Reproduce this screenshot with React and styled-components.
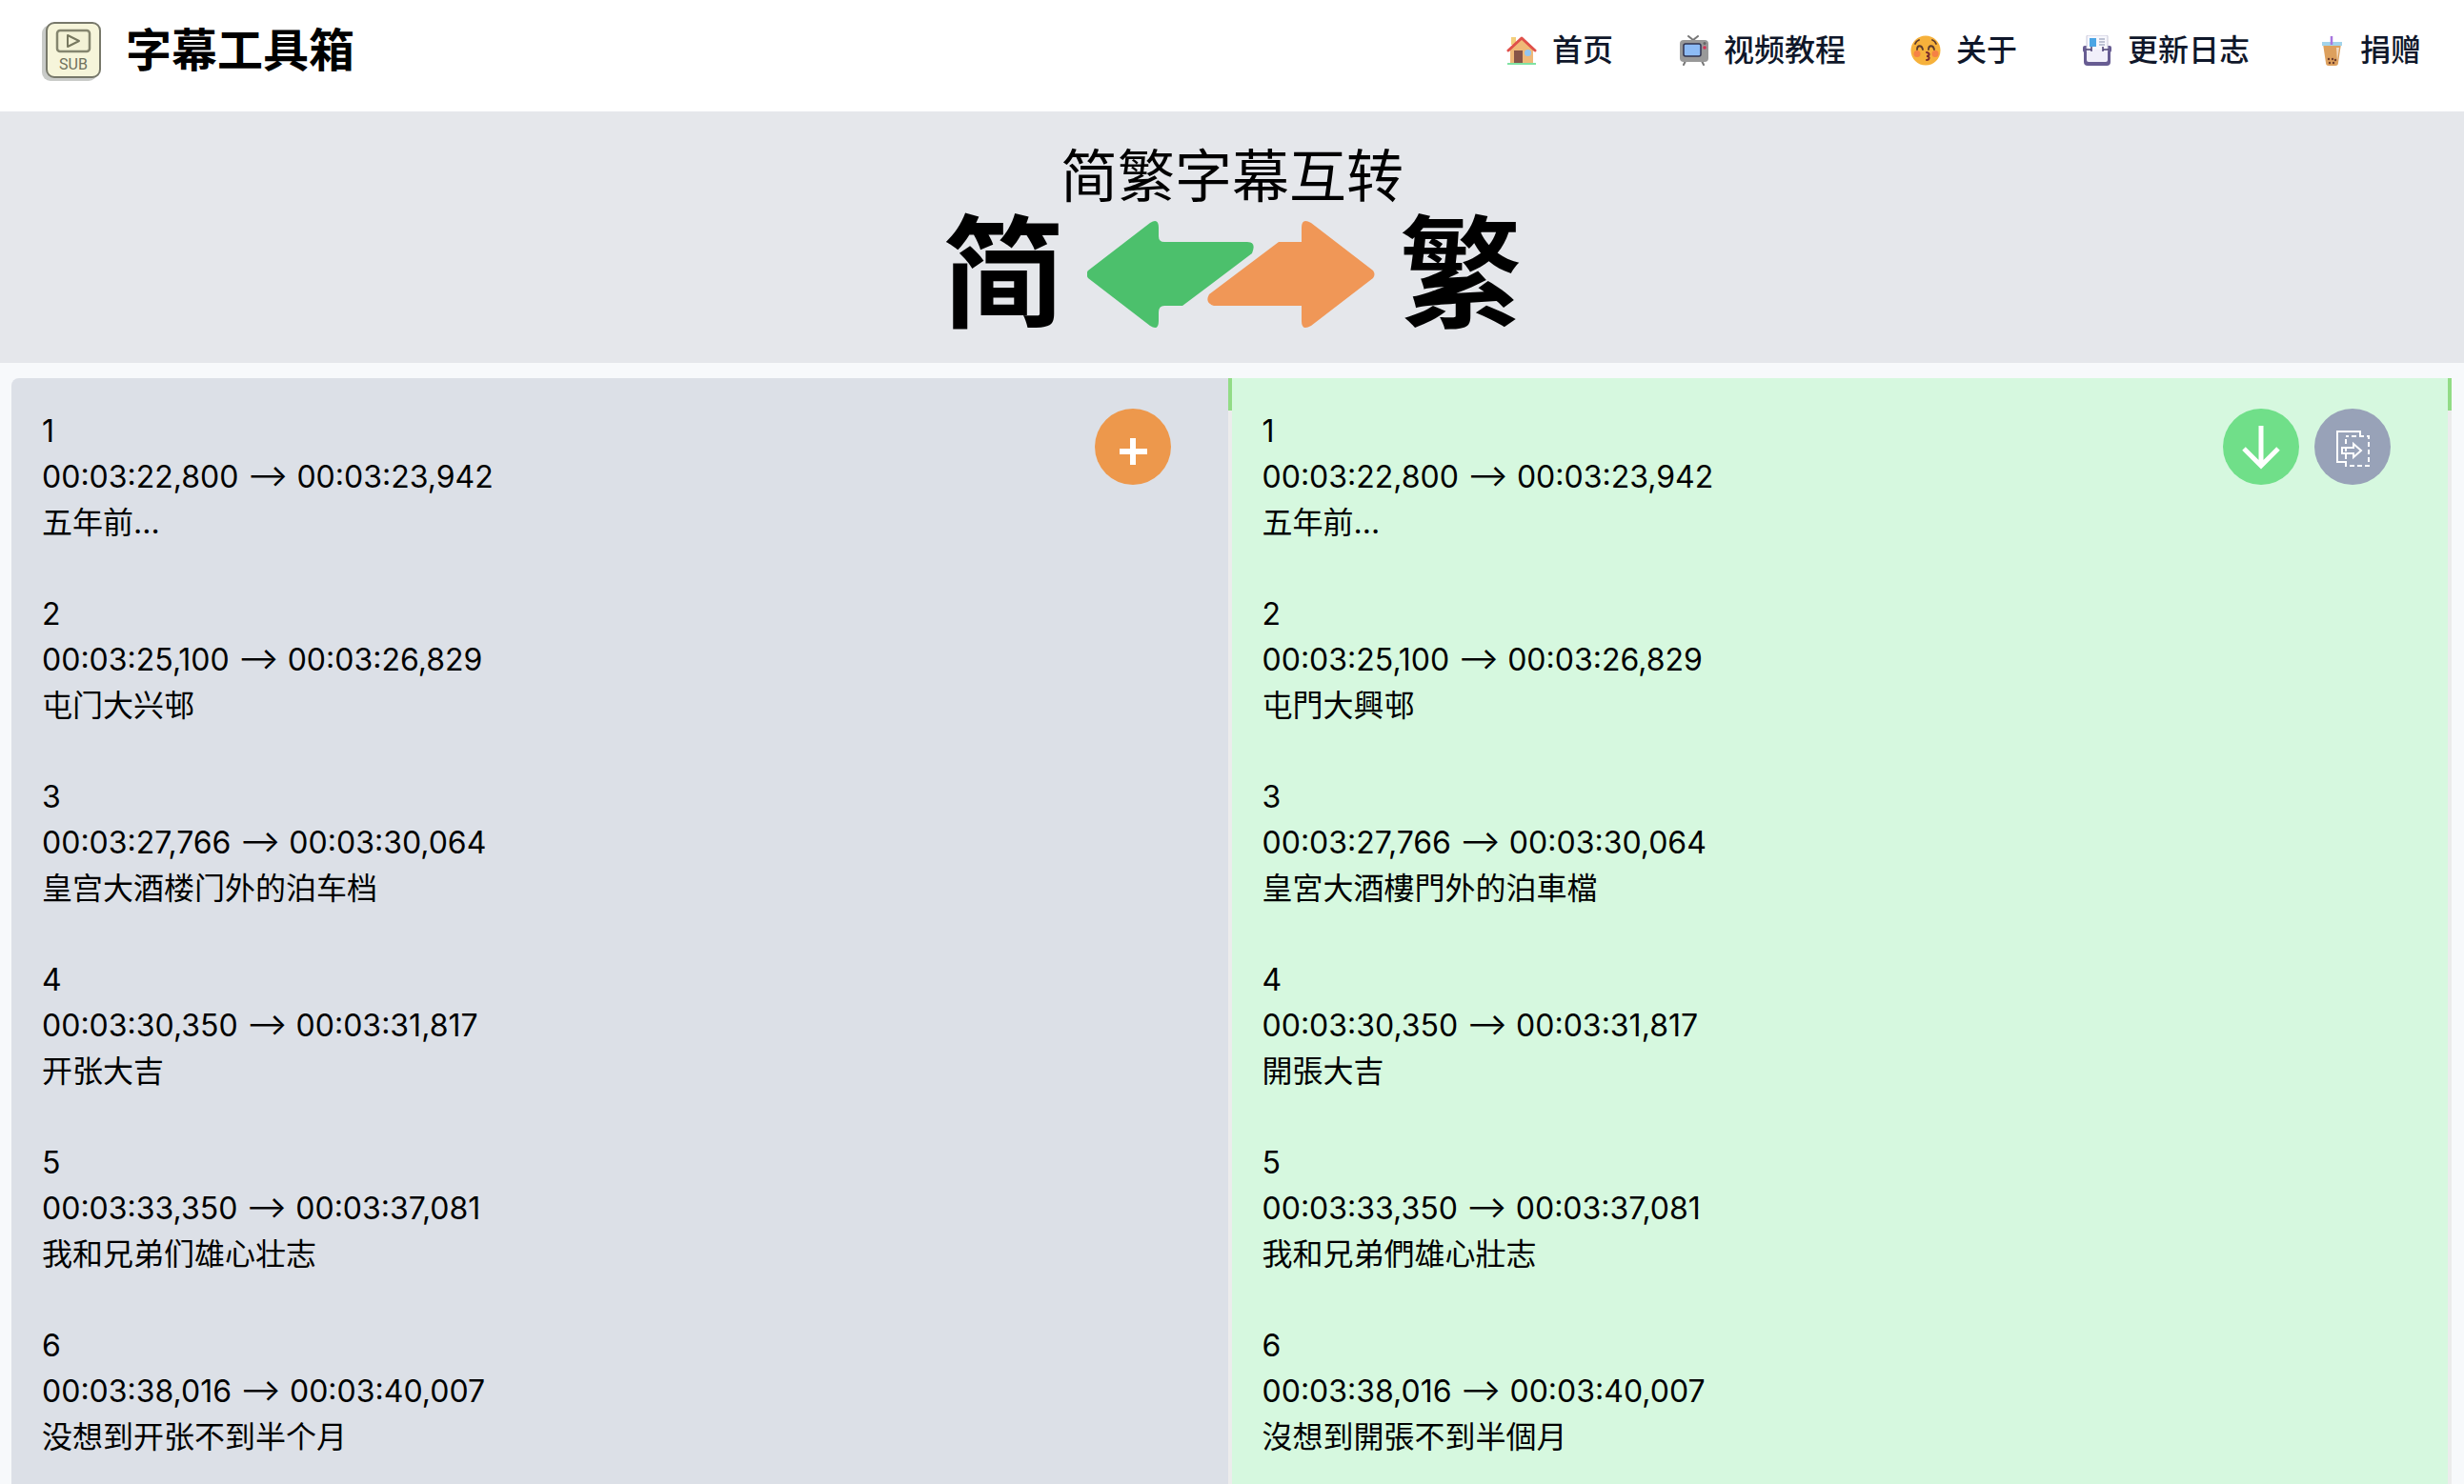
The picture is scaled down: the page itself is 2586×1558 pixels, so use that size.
import React from "react";
import styled, { createGlobalStyle } from "styled-components";

const GlobalStyle = createGlobalStyle`
  *, *::before, *::after { box-sizing: border-box; }
  body {
    margin: 0;
    background: #f7f9fb;
    color: #000;
    font-family: Inter, "Noto Sans CJK SC", sans-serif;
    font-size: 32px;
    line-height: 48px;
  }
`;

const Page = styled.div`
  display: flex;
  flex-direction: column;
  height: 100vh;
  overflow: hidden;
`;

const Header = styled.header`
  display: flex;
  align-items: center;
  justify-content: space-between;
  padding: 21px 45px 32px 44px;
  background: #fff;
`;

const Brand = styled.a`
  display: flex;
  align-items: center;
  gap: 24px;
  color: #000;
  text-decoration: none;
  font-size: 48px;
  font-weight: 700;
  line-height: 64px;
`;

const Nav = styled.nav`
  display: flex;
  gap: 68px;
`;

const NavLink = styled.a`
  display: flex;
  align-items: center;
  gap: 16px;
  color: #0f172a;
  font-weight: 500;
  text-decoration: none;
`;

const Hero = styled.section`
  display: flex;
  flex-direction: column;
  align-items: center;
  gap: 3px;
  padding: 32px 32px 29px;
  background: #e5e7eb;
`;

const HeroTitle = styled.h1`
  margin: 0;
  font-size: 60px;
  font-weight: 400;
  line-height: 72px;
`;

const Banner = styled.div`
  display: flex;
  align-items: center;
  gap: 24px;
  font-size: 128px;
  font-weight: 700;
  line-height: 128px;
`;

const Panels = styled.main`
  flex: 1;
  min-height: 0;
  display: grid;
  grid-template-columns: 1fr 1fr;
  padding: 16px 13px 0 12px;
`;

const Panel = styled.section`
  display: flex;
  min-width: 0;
  overflow: hidden;
  background: ${(p) => (p.$tone === "green" ? "#d6f8df" : "#dce0e7")};
  border-top-left-radius: ${(p) => (p.$tone === "green" ? "0" : "8px")};
  font-family: ${(p) =>
    p.$tone === "green"
      ? 'Inter, "Noto Sans CJK TC", sans-serif'
      : 'Inter, "Noto Sans CJK SC", sans-serif'};
`;

const PanelBody = styled.div`
  flex: 1;
  display: flex;
  align-items: flex-start;
  justify-content: space-between;
  padding: 32px 60px 0 32px;
`;

const CueList = styled.ol`
  display: flex;
  flex-direction: column;
  gap: 48px;
  margin: 0;
  padding: 0;
  list-style: none;
`;

const Line = styled.div`
  white-space: nowrap;
`;

const Actions = styled.div`
  display: flex;
  gap: 16px;
`;

const RoundButton = styled.button`
  display: grid;
  place-items: center;
  width: 80px;
  height: 80px;
  padding: 0;
  border: 0;
  border-radius: 50%;
  background: ${(p) => p.$color};
  color: #fff;
  cursor: pointer;
`;

const Track = styled.div`
  width: 4px;
  background: #ececec;
`;

const Thumb = styled.div`
  height: 34px;
  background: #92dc86;
`;

const LogoIcon = () => (
  <svg width="64" height="64" viewBox="0 0 64 64" aria-hidden="true">
    <rect x="0" y="5" width="58" height="59" rx="9" fill="#c9cbc8" />
    <rect x="5" y="3" width="56" height="57" rx="8" fill="#f6f5da" stroke="#77786a" strokeWidth="2" />
    <rect x="16" y="11" width="34" height="22" rx="3" fill="#f3f2d6" stroke="#85866f" strokeWidth="2.500" />
    <path d="M27 16v12l12-6z" fill="none" stroke="#77785f" strokeWidth="2" strokeLinejoin="round" />
    <text x="33" y="52" textAnchor="middle" fontFamily="Roboto, sans-serif" fontSize="16" fontWeight="400" fill="#6f705c">SUB</text>
  </svg>
);

const HomeIcon = () => (
  <svg width="32" height="32" viewBox="0 0 32 32" aria-hidden="true">
    <path d="M5 2h5v8H5z" fill="#f3cf7c" />
    <path d="M4 14 16 3l12 11v15H4z" fill="#efb978" />
    <path d="M8 16h9v13H8z" fill="#875548" />
    <circle cx="22.500" cy="18.500" r="3.500" fill="#93c7f2" />
    <path d="M2 16 16 3l14 13" fill="none" stroke="#e0504a" strokeWidth="3" strokeLinecap="round" strokeLinejoin="round" />
    <path d="M1 29h30v2H1z" fill="#80e2a2" />
  </svg>
);

const TvIcon = () => (
  <svg width="32" height="32" viewBox="0 0 32 32" aria-hidden="true">
    <path d="m11 1 5 4 5-4M8 27l-2 4M25 27l2 4" fill="none" stroke="#777" strokeWidth="2" strokeLinecap="round" />
    <rect x="2" y="5" width="30" height="23" rx="4" fill="#999" />
    <rect x="6" y="9" width="18" height="13" rx="2" fill="#8dbbf5" stroke="#30334f" strokeWidth="1.500" />
    <circle cx="28" cy="8.500" r="1.500" fill="#666" />
    <circle cx="28" cy="13" r="1.800" fill="#d33156" />
  </svg>
);

const FaceIcon = () => (
  <svg width="32" height="32" viewBox="0 0 32 32" aria-hidden="true">
    <circle cx="16" cy="16" r="15.500" fill="#f6b13b" />
    <circle cx="7" cy="19.500" r="3.500" fill="#f58145" />
    <circle cx="26" cy="19.500" r="3.500" fill="#f58145" />
    <path d="M7 15c0-5 5-5 6 0M19 15c0-5 5-5 6 0M5 9q1-3 4-4M23 5q3 1 4 4" fill="none" stroke="#5c3a2d" strokeWidth="1.800" strokeLinecap="round" />
    <path d="M17 18c4 1 3 4 0 4 4 0 3 4 0 4" fill="none" stroke="#7b2c2c" strokeWidth="2" strokeLinecap="round" />
  </svg>
);

const LogIcon = () => (
  <svg width="32" height="32" viewBox="0 0 32 32" aria-hidden="true">
    <rect x="1" y="11" width="30" height="7" rx="2" fill="#675c92" />
    <path d="M2 14h28v14a4 4 0 0 1-4 4H6a4 4 0 0 1-4-4z" fill="#675c92" />
    <rect x="5" y="0" width="22" height="17" rx="1" fill="#f7f7fc" stroke="#c7c6d9" />
    <path d="M8 3h7v9H8z" fill="#4ba5e4" />
    <path d="M18 4h6M18 7h6M18 10h6" stroke="#aab1c5" strokeWidth="1.500" />
    <path d="M5 15h22v11a2 2 0 0 1-2 2H7a2 2 0 0 1-2-2z" fill="#f1effa" />
    <path d="M4 15h6M22 15h6M10 12v5M22 12v5" stroke="#4b4273" strokeWidth="1.500" />
  </svg>
);

const DrinkIcon = () => (
  <svg width="32" height="32" viewBox="0 0 32 32" aria-hidden="true">
    <path d="M9 9h19l-3 20q0 3-3 3h-7q-3 0-3-3z" fill="#dda05d" />
    <path d="M23 13h3l-2 14z" fill="#f4dac0" />
    <path d="M8 7h21v4H8z" fill="#a2d3eb" />
    <path d="M18 1v9" stroke="#a775df" strokeWidth="2.500" />
    <g fill="#6b3d2d">
      <circle cx="15" cy="25" r="1.200" />
      <circle cx="19" cy="25" r="1.200" />
      <circle cx="22" cy="26" r="1.200" />
      <circle cx="16" cy="29" r="1.200" />
      <circle cx="20" cy="29" r="1.200" />
    </g>
  </svg>
);

const SwapArrows = () => (
  <svg width="304" height="114" viewBox="0 0 304 114" aria-hidden="true">
    <path d="M1 53Q-2 57 1 61L66 111Q75 117 75 106V97Q75 90 81 90H100L173 35Q178 23 168 23H81Q75 23 75 17V8Q75-3 66 3Z" fill="#4cc06c" />
    <path d="M300 53Q303 57 300 61L235 111Q225 117 225 106V90H133Q123 87 128 78L201 23H225V8Q225-3 235 3Z" fill="#f09757" />
  </svg>
);

const PlusIcon = () => (
  <svg width="80" height="80" viewBox="0 0 80 80" aria-hidden="true">
    <path d="M26 45h29M40 31v28" stroke="currentColor" strokeWidth="6" />
  </svg>
);

const DownIcon = () => (
  <svg width="80" height="80" viewBox="0 0 80 80" aria-hidden="true">
    <path d="M40 18v42M22 42l18 18 18-18" fill="none" stroke="currentColor" strokeWidth="5" />
  </svg>
);

const CopyIcon = () => (
  <svg width="80" height="80" viewBox="0 0 80 80" aria-hidden="true" fill="none" stroke="currentColor" strokeWidth="2">
    <path d="M34 56H24V24h24v6" />
    <path d="M33 29h24v31H33z" strokeDasharray="5 3" strokeDashoffset="2" />
    <path d="M29 41h12v-4l8 7-8 7v-4H29z" />
  </svg>
);

const navItems = [
  { label: "首页", Icon: HomeIcon },
  { label: "视频教程", Icon: TvIcon },
  { label: "关于", Icon: FaceIcon },
  { label: "更新日志", Icon: LogIcon },
  { label: "捐赠", Icon: DrinkIcon },
];

const cues = [
  { time: "00:03:22,800 --> 00:03:23,942", hans: "五年前...", hant: "五年前..." },
  { time: "00:03:25,100 --> 00:03:26,829", hans: "屯门大兴邨", hant: "屯門大興邨" },
  { time: "00:03:27,766 --> 00:03:30,064", hans: "皇宫大酒楼门外的泊车档", hant: "皇宮大酒樓門外的泊車檔" },
  { time: "00:03:30,350 --> 00:03:31,817", hans: "开张大吉", hant: "開張大吉" },
  { time: "00:03:33,350 --> 00:03:37,081", hans: "我和兄弟们雄心壮志", hant: "我和兄弟們雄心壯志" },
  { time: "00:03:38,016 --> 00:03:40,007", hans: "没想到开张不到半个月", hant: "沒想到開張不到半個月" },
];

const Cues = ({ script }) => (
  <CueList>
    {cues.map((cue, i) => (
      <li key={cue.time}>
        <Line>{i + 1}</Line>
        <Line>{cue.time}</Line>
        <Line>{cue[script]}</Line>
      </li>
    ))}
  </CueList>
);

export default function App() {
  return (
    <Page lang="zh-CN">
      <GlobalStyle />
      <Header>
        <Brand href="#">
          <LogoIcon />
          字幕工具箱
        </Brand>
        <Nav>
          {navItems.map(({ label, Icon }) => (
            <NavLink key={label} href="#">
              <Icon />
              {label}
            </NavLink>
          ))}
        </Nav>
      </Header>
      <Hero>
        <HeroTitle>简繁字幕互转</HeroTitle>
        <Banner>
          <span>简</span>
          <SwapArrows />
          <span>繁</span>
        </Banner>
      </Hero>
      <Panels>
        <Panel>
          <PanelBody>
            <Cues script="hans" />
            <Actions>
              <RoundButton type="button" aria-label="添加字幕" $color="#ed984c">
                <PlusIcon />
              </RoundButton>
            </Actions>
          </PanelBody>
          <Track>
            <Thumb />
          </Track>
        </Panel>
        <Panel $tone="green" lang="zh-TW">
          <PanelBody>
            <Cues script="hant" />
            <Actions>
              <RoundButton type="button" aria-label="下载" $color="#70df89">
                <DownIcon />
              </RoundButton>
              <RoundButton type="button" aria-label="复制" $color="#98a2b8">
                <CopyIcon />
              </RoundButton>
            </Actions>
          </PanelBody>
          <Track>
            <Thumb />
          </Track>
        </Panel>
      </Panels>
    </Page>
  );
}
